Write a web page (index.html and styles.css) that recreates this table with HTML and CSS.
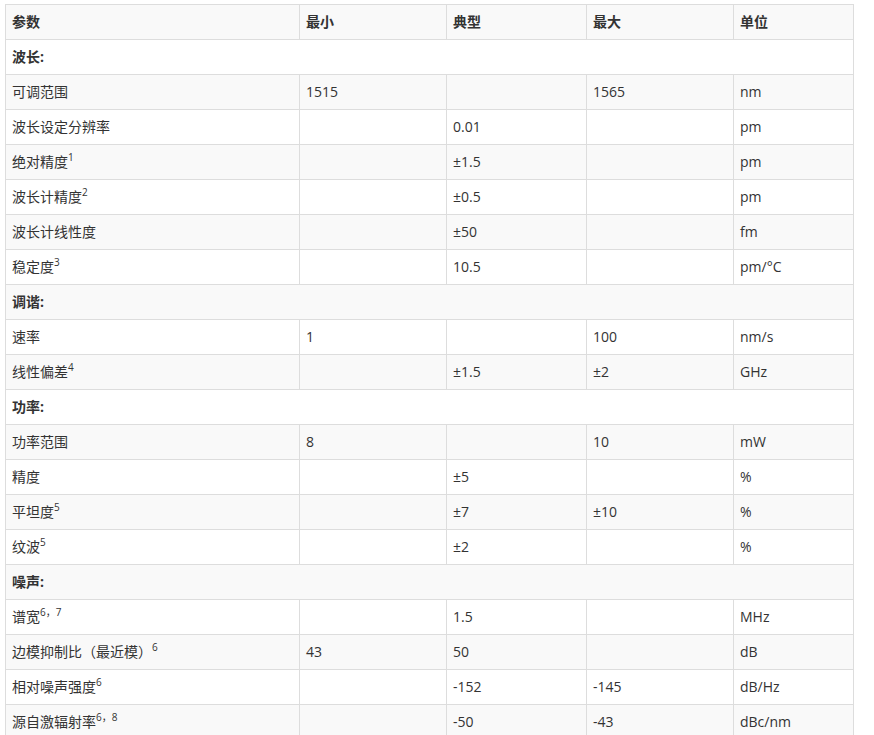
FILE: index.html
```html
<!DOCTYPE html>
<html lang="zh-CN">
<head>
<meta charset="utf-8">
<title>参数</title>
<link rel="stylesheet" href="styles.css">
</head>
<body>
<div class="wrap">
<table class="spec">
<colgroup>
<col class="c1"><col class="c2"><col class="c3"><col class="c4"><col class="c5">
</colgroup>
<tbody>
<tr class="head"><td>参数</td><td>最小</td><td>典型</td><td>最大</td><td>单位</td></tr>
<tr class="sec"><td colspan="5">波长:</td></tr>
<tr><td>可调范围</td><td>1515</td><td></td><td>1565</td><td>nm</td></tr>
<tr><td>波长设定分辨率</td><td></td><td>0.01</td><td></td><td>pm</td></tr>
<tr><td>绝对精度<sup>1</sup></td><td></td><td>±1.5</td><td></td><td>pm</td></tr>
<tr><td>波长计精度<sup>2</sup></td><td></td><td>±0.5</td><td></td><td>pm</td></tr>
<tr><td>波长计线性度</td><td></td><td>±50</td><td></td><td>fm</td></tr>
<tr><td>稳定度<sup>3</sup></td><td></td><td>10.5</td><td></td><td>pm/°C</td></tr>
<tr class="sec"><td colspan="5">调谐:</td></tr>
<tr><td>速率</td><td>1</td><td></td><td>100</td><td>nm/s</td></tr>
<tr><td>线性偏差<sup>4</sup></td><td></td><td>±1.5</td><td>±2</td><td>GHz</td></tr>
<tr class="sec"><td colspan="5">功率:</td></tr>
<tr><td>功率范围</td><td>8</td><td></td><td>10</td><td>mW</td></tr>
<tr><td>精度</td><td></td><td>±5</td><td></td><td>%</td></tr>
<tr><td>平坦度<sup>5</sup></td><td></td><td>±7</td><td>±10</td><td>%</td></tr>
<tr><td>纹波<sup>5</sup></td><td></td><td>±2</td><td></td><td>%</td></tr>
<tr class="sec"><td colspan="5">噪声:</td></tr>
<tr><td>谱宽<sup>6，7</sup></td><td></td><td>1.5</td><td></td><td>MHz</td></tr>
<tr><td>边模抑制比（最近模）<sup>6</sup></td><td>43</td><td>50</td><td></td><td>dB</td></tr>
<tr><td>相对噪声强度<sup>6</sup></td><td></td><td>-152</td><td>-145</td><td>dB/Hz</td></tr>
<tr><td>源自激辐射率<sup>6，8</sup></td><td></td><td>-50</td><td>-43</td><td>dBc/nm</td></tr>
</tbody>
</table>
</div>
</body>
</html>
```
FILE: styles.css
```css
html, body {
  margin: 0;
  padding: 0;
  background: #fff;
}
.wrap {
  padding: 4px 0 0 5px;
}
.spec {
  border-collapse: collapse;
  table-layout: fixed;
  width: 848px;
  font-family: "Open Sans", "Noto Sans CJK SC", sans-serif;
  font-size: 14px;
  color: #333;
}
.c1 { width: 294px; }
.c2 { width: 147px; }
.c3 { width: 140px; }
.c4 { width: 147px; }
.c5 { width: 120px; }
.spec td {
  border: 1px solid #ddd;
  height: 34px;
  box-sizing: border-box;
  padding: 0 6px;
  vertical-align: middle;
  line-height: 20px;
  white-space: nowrap;
}
.spec tr {
  height: 35px;
}
.spec tr:nth-child(odd) {
  background: #f9f9f9;
}
.head td, .sec td {
  font-weight: bold;
}
.spec sup {
  font-size: 10px;
  line-height: 0;
  vertical-align: 6px;
}
```
